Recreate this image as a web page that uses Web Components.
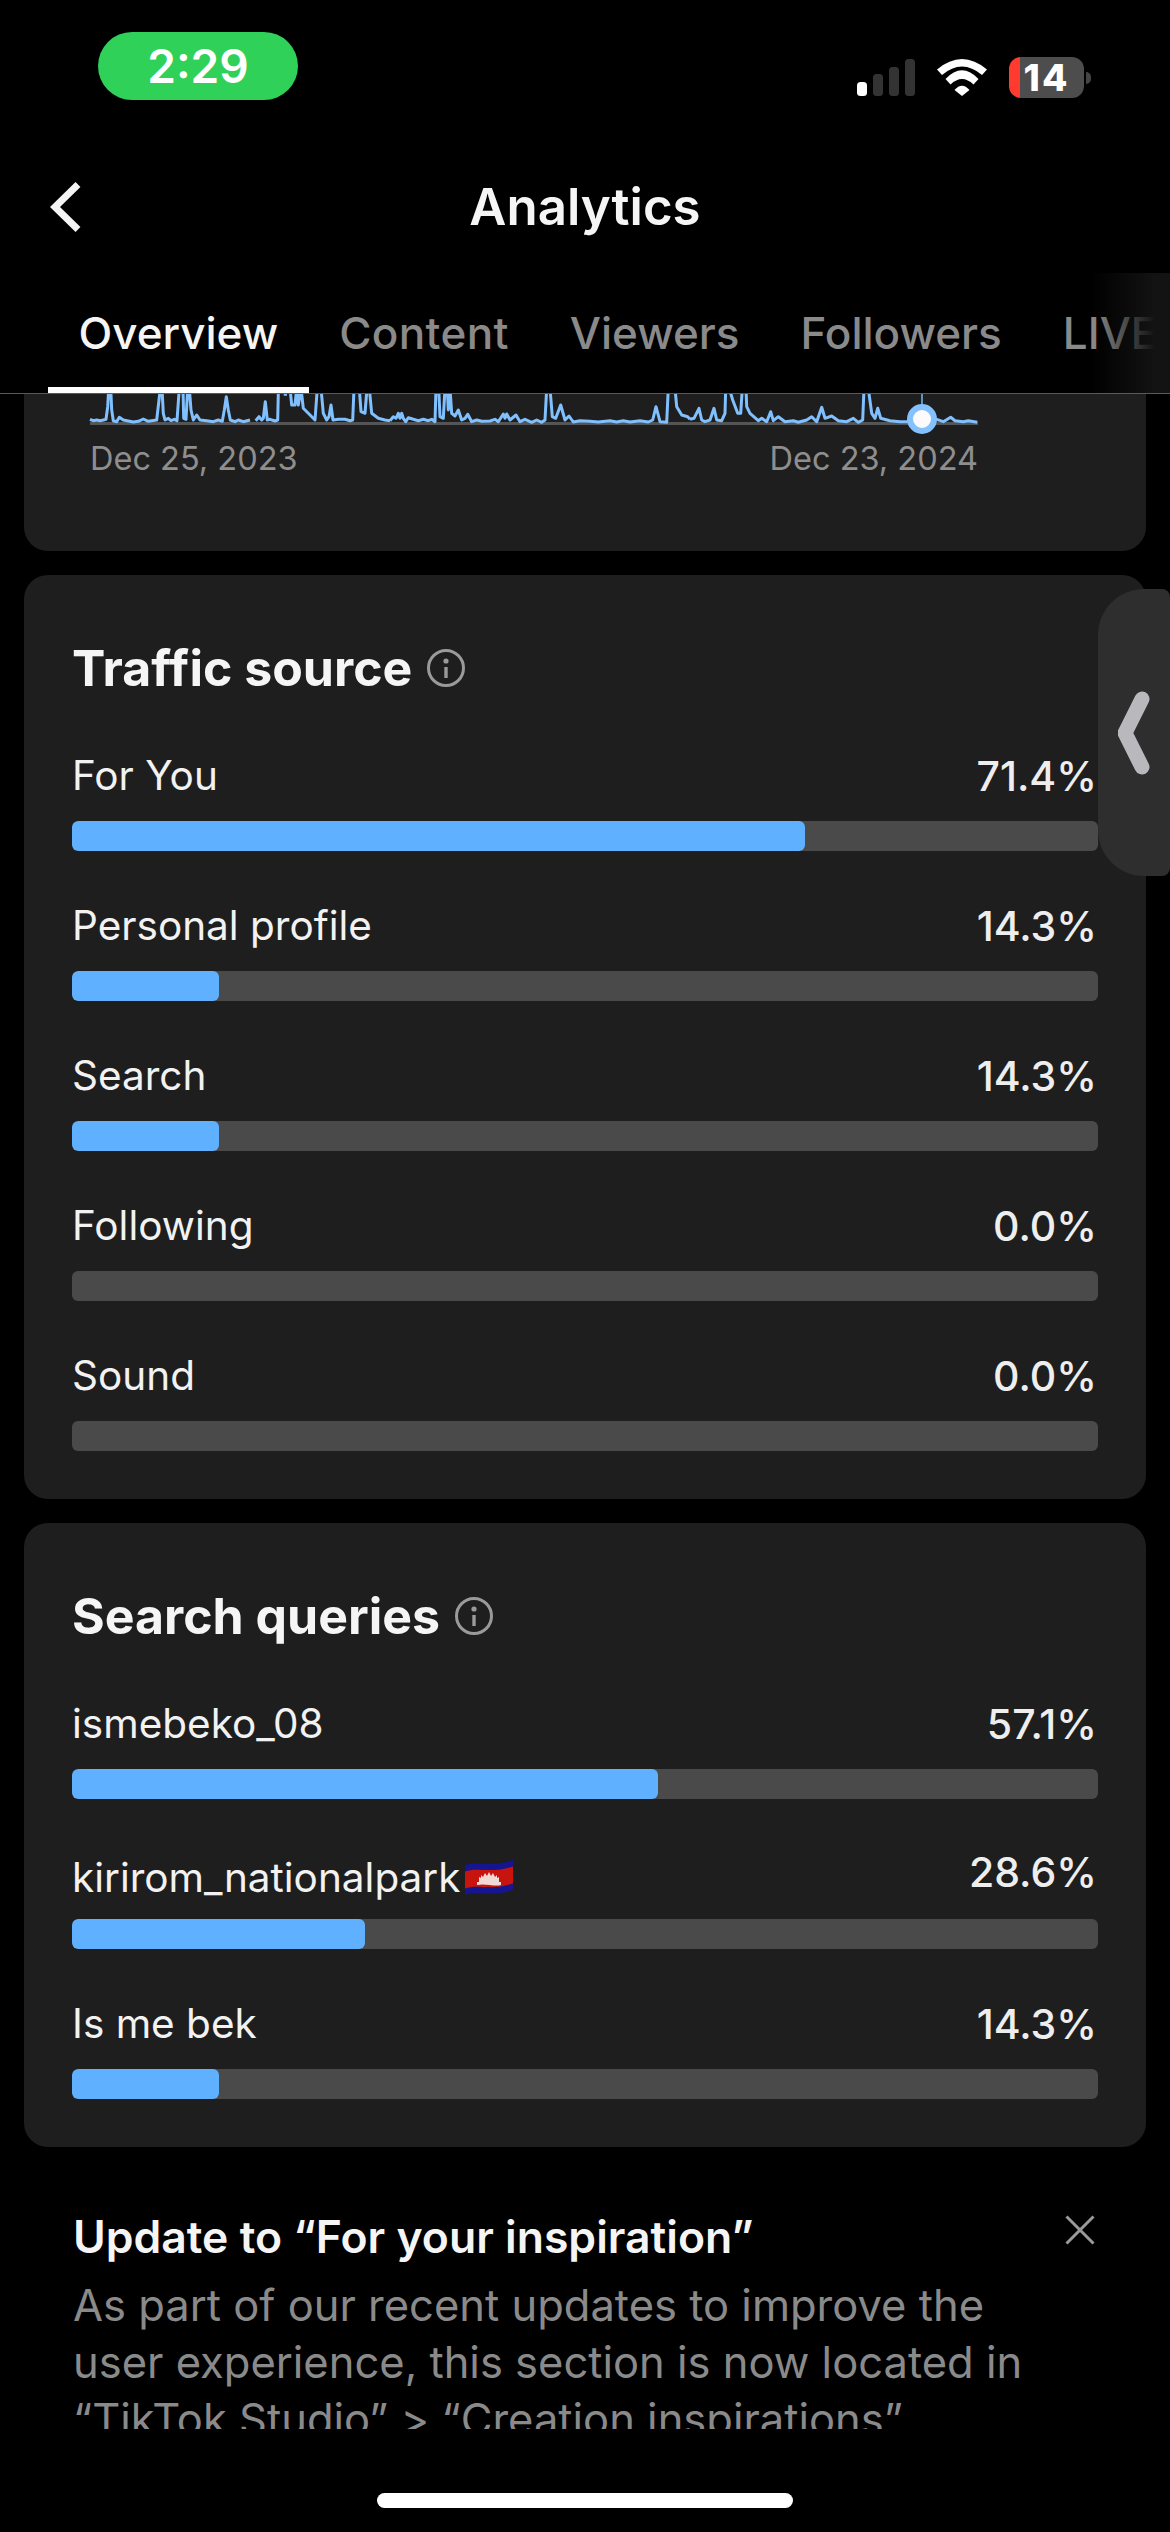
<!DOCTYPE html>
<html lang="en">
<head>
<meta charset="utf-8">
<title>Analytics</title>
<style>
html,body{margin:0;padding:0;background:#000;}
body{font-family:"Inter","Liberation Sans",sans-serif;color:#f5f5f5;}
</style>
</head>
<body>
<app-screen>
  <status-bar time="2:29" battery="14"></status-bar>
  <nav-header>Analytics</nav-header>
  <tab-bar>
    <tab-item active>Overview</tab-item>
    <tab-item style="letter-spacing:.35px">Content</tab-item>
    <tab-item>Viewers</tab-item>
    <tab-item>Followers</tab-item>
    <tab-item>LIVE</tab-item>
  </tab-bar>
  <scroll-area>
    <chart-card start="Dec 25, 2023" end="Dec 23, 2024"></chart-card>
    <metric-card heading="Traffic source">
      <metric-row value="71.4%" pct="71.4">For You</metric-row>
      <metric-row value="14.3%" pct="14.3">Personal profile</metric-row>
      <metric-row value="14.3%" pct="14.3">Search</metric-row>
      <metric-row value="0.0%" pct="0">Following</metric-row>
      <metric-row value="0.0%" pct="0">Sound</metric-row>
    </metric-card>
    <metric-card heading="Search queries">
      <metric-row value="57.1%" pct="57.1">ismebeko_08</metric-row>
      <metric-row value="28.6%" pct="28.6" emoji>kirirom_nationalpark<kh-flag></kh-flag></metric-row>
      <metric-row value="14.3%" pct="14.3">Is me bek</metric-row>
    </metric-card>
    <update-notice heading="Update to “For your inspiration”">As part of our recent updates to improve the<br>user experience, this section is now located in<br>“TikTok Studio” &gt; “Creation inspirations”.</update-notice>
  </scroll-area>
  <side-handle></side-handle>
  <home-indicator></home-indicator>
</app-screen>
<script>
function shell(el, html){ el.attachShadow({mode:'open'}).innerHTML = html; }

customElements.define('app-screen', class extends HTMLElement{
  constructor(){ super(); shell(this, `<style>
    :host{display:flex;flex-direction:column;position:relative;width:1170px;height:2532px;overflow:hidden;background:#000;}
  </style><slot></slot>`); }
});

customElements.define('status-bar', class extends HTMLElement{
  constructor(){ super(); shell(this, `<style>
    :host{display:flex;height:140px;box-sizing:border-box;padding:32px 79px 0 98px;flex:none;}
    .pill{width:200px;height:68px;border-radius:34px;background:#30d158;color:#fff;display:flex;align-items:center;justify-content:center;font:600 46px/1 "Inter",sans-serif;}
    .icons{margin-left:auto;display:flex;align-items:flex-start;gap:22px;padding-top:25px;}
    svg{display:block;}
    .batt{display:flex;align-items:center;margin-top:0;gap:2px;}
    .body{width:75px;height:41px;border-radius:12px;background:linear-gradient(90deg,#ff3b30 11px,#4d4d4d 11px);color:#fff;font:800 37px/41px "Inter",sans-serif;text-align:center;box-sizing:border-box;letter-spacing:2px;}
    .nub{width:5px;height:12px;border-radius:0 6px 6px 0;background:#444;}
    .signal,.wifi{margin-top:2px;}
  </style>
  <div class="pill">${this.getAttribute('time')}</div>
  <div class="icons">
    <svg class="signal" width="58" height="37" viewBox="0 0 58 37">
      <rect x="0" y="23" width="10" height="14" rx="3.5" fill="#fff"/>
      <rect x="16" y="15" width="10" height="22" rx="3.5" fill="#333"/>
      <rect x="32" y="8" width="10" height="29" rx="3.5" fill="#333"/>
      <rect x="48" y="0" width="10" height="37" rx="3.5" fill="#333"/>
    </svg>
    <svg class="wifi" width="50" height="37" viewBox="0 0 50 37" fill="#fff">
      <path d="M0 10.5Q25-10.5 50 10.5L45 16Q25-1 5 16Z"/>
      <path d="M8.5 20Q25 2.6 41.5 20L36.5 25.5Q25 14.5 13.5 25.5Z"/>
      <path d="M17.5 31Q25 22.4 32.5 31L25 37Z"/>
    </svg>
    <div class="batt"><div class="body">${this.getAttribute('battery')}</div><div class="nub"></div></div>
  </div>`); }
});

customElements.define('nav-header', class extends HTMLElement{
  constructor(){ super(); shell(this, `<style>
    :host{display:grid;grid-template-columns:1fr auto 1fr;align-items:center;height:133px;flex:none;}
    svg{display:block;margin-left:50px;}
    h1{margin:0;font:600 51px/60px "Inter",sans-serif;color:#f5f5f5;}
  </style>
  <svg width="32" height="52" viewBox="0 0 32 52"><path d="M28 3.5 5 26l23 22.5" fill="none" stroke="#f5f5f5" stroke-width="7"/></svg>
  <h1><slot></slot></h1><span></span>`); }
});

customElements.define('tab-bar', class extends HTMLElement{
  constructor(){ super(); shell(this, `<style>
    :host{display:block;position:relative;height:121px;flex:none;box-sizing:border-box;border-bottom:1px solid #5a5a5a;overflow:hidden;}
    .row{display:flex;height:120px;padding-left:48px;white-space:nowrap;}
    .fade{position:absolute;left:1092px;top:0;width:78px;height:120px;background:linear-gradient(90deg,rgba(19,19,19,0),rgba(19,19,19,.55) 45%,#131313 80%);}
  </style><div class="row"><slot></slot></div><div class="fade"></div>`); }
});

customElements.define('tab-item', class extends HTMLElement{
  constructor(){ super(); shell(this, `<style>
    :host{display:block;box-sizing:border-box;height:120px;padding:0 30.5px;font:500 44px/120px "Inter",sans-serif;color:#8a8a8a;flex:none;}
    :host([active]){color:#f5f5f5;border-bottom:6px solid #fff;}
  </style><slot></slot>`); }
});

customElements.define('scroll-area', class extends HTMLElement{
  constructor(){ super(); shell(this, `<style>
    :host{display:flex;flex-direction:column;gap:24px;flex:1;min-height:0;overflow:hidden;padding:0 24px;}
  </style><slot></slot>`); }
});

const chartSegs = [
 [85,[[15,88],[25,92],[35,90],[45,92],[55,90],[63,88],[68,50],[71,-5],[77,-5],[80,60],[85,92],[95,95],[103,82],[115,90],[130,93],[145,96],[160,94],[175,87],[190,94],[215,90],[222,30],[226,-5],[231,-5],[235,70],[240,90],[250,85],[258,92],[268,88],[276,92],[283,-5],[287,-5],[294,-5],[296,85],[303,88],[308,-5],[313,-5],[318,60],[325,90],[335,75],[345,90],[365,92],[385,95],[400,90],[412,94],[418,60],[424,20],[430,60],[436,90],[450,95],[460,90],[475,95],[495,90]]],
 [85,[[512,92],[522,80],[530,90],[535,85],[541,35],[547,90],[555,88],[570,93],[578,90],[580,10],[582,-5]]],
 [85,[[596,13],[606,13]]],
 [85,[[615,-5],[620,45],[630,45],[635,-5],[640,45],[648,-5],[655,55],[670,70],[690,90],[697,-5],[708,-5],[715,70],[725,90],[732,80],[738,45],[744,90],[760,88],[780,88],[795,92],[803,90],[807,-5],[823,-5],[828,65],[840,70],[846,-5],[853,-5],[860,70],[880,85],[900,90],[915,92]]],
 [390,[[0,92],[10,80],[18,85],[25,70],[30,85],[35,70],[40,85],[47,95],[55,83],[70,88],[85,92],[100,88],[115,92],[125,88],[135,95],[138,-5],[146,-5],[150,80],[160,85],[165,-5],[172,-5],[175,60],[180,-5],[185,70],[195,78],[205,60],[215,90],[225,85],[233,73],[245,95],[260,90],[275,94],[300,93],[315,88],[325,95],[340,72],[345,85],[350,72],[360,90],[378,75],[390,95],[405,88],[425,97],[440,90],[455,97],[465,90],[470,-5],[480,-5],[487,80],[497,85],[512,45],[525,90],[537,78],[550,96],[570,92],[600,94],[625,96],[660,92],[680,96],[700,92],[720,96],[750,92],[775,96],[788,90],[798,50],[810,95],[830,97],[835,-5],[855,-5],[860,50],[875,75],[893,80],[900,88]]],
 [690,[[0,88],[12,85],[27,55],[35,90],[45,95],[60,90],[72,55],[80,90],[95,92],[105,70],[107,-5],[118,-5],[128,30],[143,70],[152,70],[157,-5],[168,-5],[170,50],[180,70],[205,92],[215,85],[230,95],[242,65],[250,92],[265,80],[285,95],[310,92],[325,97],[350,90],[365,80],[380,95],[395,52],[405,85],[425,78],[445,92],[470,95],[490,85],[505,97],[518,90],[522,-5],[535,-5],[545,70],[555,85],[563,55],[572,85],[600,92],[630,95],[650,95],[697,87],[740,88],[760,95],[782,82],[795,92],[820,95],[835,92],[862,97]]]
];
customElements.define('chart-card', class extends HTMLElement{
  constructor(){
    super();
    const ox=84, oy=394;
    const d = chartSegs.map(([x0,pts])=>'M'+pts.map(([x,y])=>((x0+x/3-ox).toFixed(1)+' '+(390+y/3-oy).toFixed(1))).join('L')).join('');
    shell(this, `<style>
      :host{display:block;flex:none;width:1122px;height:157px;box-sizing:border-box;background:#1e1e1e;border-radius:0 0 24px 24px;padding:0 169px 0 60px;}
      svg{display:block;overflow:visible;}
      .dates{display:flex;justify-content:space-between;margin:13px -1px 0 6px;font:400 32.5px/40px "Inter",sans-serif;color:#8e8e8e;}
    </style>
    <svg width="893" height="32" viewBox="0 0 893 32">
      <rect x="6" y="28" width="888" height="3" fill="#555"/>
      <path d="${d}" fill="none" stroke="#80c0ff" stroke-width="3" stroke-linejoin="round"/>
      <path d="M838 0V12" stroke="#80c0ff" stroke-width="1.4"/>
      <circle cx="838" cy="25" r="12" fill="#fbfbfb" stroke="#84c1ff" stroke-width="6"/>
    </svg>
    <div class="dates"><span>${this.getAttribute('start')}</span><span>${this.getAttribute('end')}</span></div>`);
  }
});

customElements.define('info-icon', class extends HTMLElement{
  constructor(){ super(); shell(this, `<style>:host{display:block;width:38px;height:38px;flex:none;} svg{display:block;}</style>
  <svg width="38" height="38" viewBox="0 0 38 38" fill="none"><circle cx="19" cy="19" r="17.5" stroke="#9a9a9a" stroke-width="3"/><circle cx="19" cy="12" r="2.6" fill="#9a9a9a"/><path d="M19 18v11" stroke="#9a9a9a" stroke-width="3.4"/></svg>`); }
});

customElements.define('metric-card', class extends HTMLElement{
  constructor(){ super(); shell(this, `<style>
    :host{display:block;flex:none;background:#1e1e1e;border-radius:24px;padding:63px 48px 48px;}
    .head{display:flex;align-items:center;gap:15px;height:60px;margin:0 0 53px 0;}
    h2{margin:0;font:700 50px/60px "Inter",sans-serif;color:#f5f5f5;}
    .rows{display:flex;flex-direction:column;gap:50px;}
  </style>
  <div class="head"><h2>${this.getAttribute('heading')}</h2><info-icon></info-icon></div>
  <div class="rows"><slot></slot></div>`); }
});

customElements.define('metric-row', class extends HTMLElement{
  constructor(){ super();
    const pct=this.getAttribute('pct');
    shell(this, `<style>
    :host{display:block;}
    .top{display:flex;justify-content:space-between;align-items:center;height:50px;margin-bottom:20px;font:400 40.5px/50px "Inter",sans-serif;color:#f2f2f2;white-space:nowrap;}
    .label{display:flex;align-items:center;}
    .value{font-size:41px;font-weight:500;padding-right:1px;color:#eee;}
    :host([emoji]) .label{margin-top:8px;}
    :host([emoji]) .value{margin-bottom:4px;}
    .track{height:30px;border-radius:6px;background:#4a4a4a;overflow:hidden;}
    .fill{height:100%;width:${pct}%;border-radius:6px;background:#5fb0ff;}
  </style>
  <div class="top"><span class="label"><slot></slot></span><span class="value">${this.getAttribute('value')}</span></div>
  <div class="track"><div class="fill"></div></div>`); }
});

customElements.define('kh-flag', class extends HTMLElement{
  constructor(){ super(); shell(this, `<style>:host{display:block;margin:0 0 0 5px;width:48px;height:36px;flex:none;} svg{display:block;}</style>
  <svg width="48" height="36" viewBox="0 0 48 36" role="img" aria-label="Flag of Cambodia">
    <path d="M0 5C12 0 24 8 48 0V30C24 38 12 30 0 35Z" fill="#15158f"/>
    <path d="M0 11.5C12 6.5 24 14 48 6.5V23.5C24 31 12 23.5 0 28.5Z" fill="#c8140f"/>
    <path d="M12 25V22h2v-5l2 1v-3l2 2 2-4 2 3 2-4 2 4 2-3 2 4 2-2v3l2-1v5h2v3C30 27 20 23 12 25Z" fill="#f1d9d5"/>
  </svg>`); }
});

customElements.define('update-notice', class extends HTMLElement{
  constructor(){ super(); shell(this, `<style>
    :host{display:block;flex:none;margin:24px 0 0;padding:12px 50px 0 49px;position:relative;}
    .head{display:flex;justify-content:space-between;align-items:flex-start;}
    h3{margin:0;font:600 44.5px/60px "Inter",sans-serif;color:#f5f5f5;white-space:nowrap;}
    svg{display:block;margin:8px 1px 0 0;}
    .body{margin-top:10px;height:152px;overflow:hidden;font:400 43.5px/57px "Inter",sans-serif;color:#8a8a8a;white-space:nowrap;}
  </style>
  <div class="head"><h3>${this.getAttribute('heading')}</h3>
  <svg width="30" height="30" viewBox="0 0 30 30"><path d="M1.5 1.5 28.5 28.5M28.5 1.5 1.5 28.5" stroke="#9a9a9a" stroke-width="3" fill="none"/></svg></div>
  <div class="body"><slot></slot></div>`); }
});

customElements.define('side-handle', class extends HTMLElement{
  constructor(){ super(); shell(this, `<style>
    :host{position:absolute;left:1098px;top:589px;width:72px;height:287px;box-sizing:border-box;border-radius:46px 8px 8px 46px;background:#2e2e2e;display:flex;align-items:center;padding-left:20px;}
    svg{display:block;}
  </style>
  <svg width="34" height="84" viewBox="0 0 34 84"><path d="M24 8 7 42l17 34" fill="none" stroke="#b9b8bd" stroke-width="15" stroke-linecap="round" stroke-linejoin="round"/></svg>`); }
});

customElements.define('home-indicator', class extends HTMLElement{
  constructor(){ super(); shell(this, `<style>
    :host{position:absolute;left:377px;top:2493px;width:416px;height:15px;border-radius:8px;background:#fff;}
  </style>`); }
});
</script>
</body>
</html>
